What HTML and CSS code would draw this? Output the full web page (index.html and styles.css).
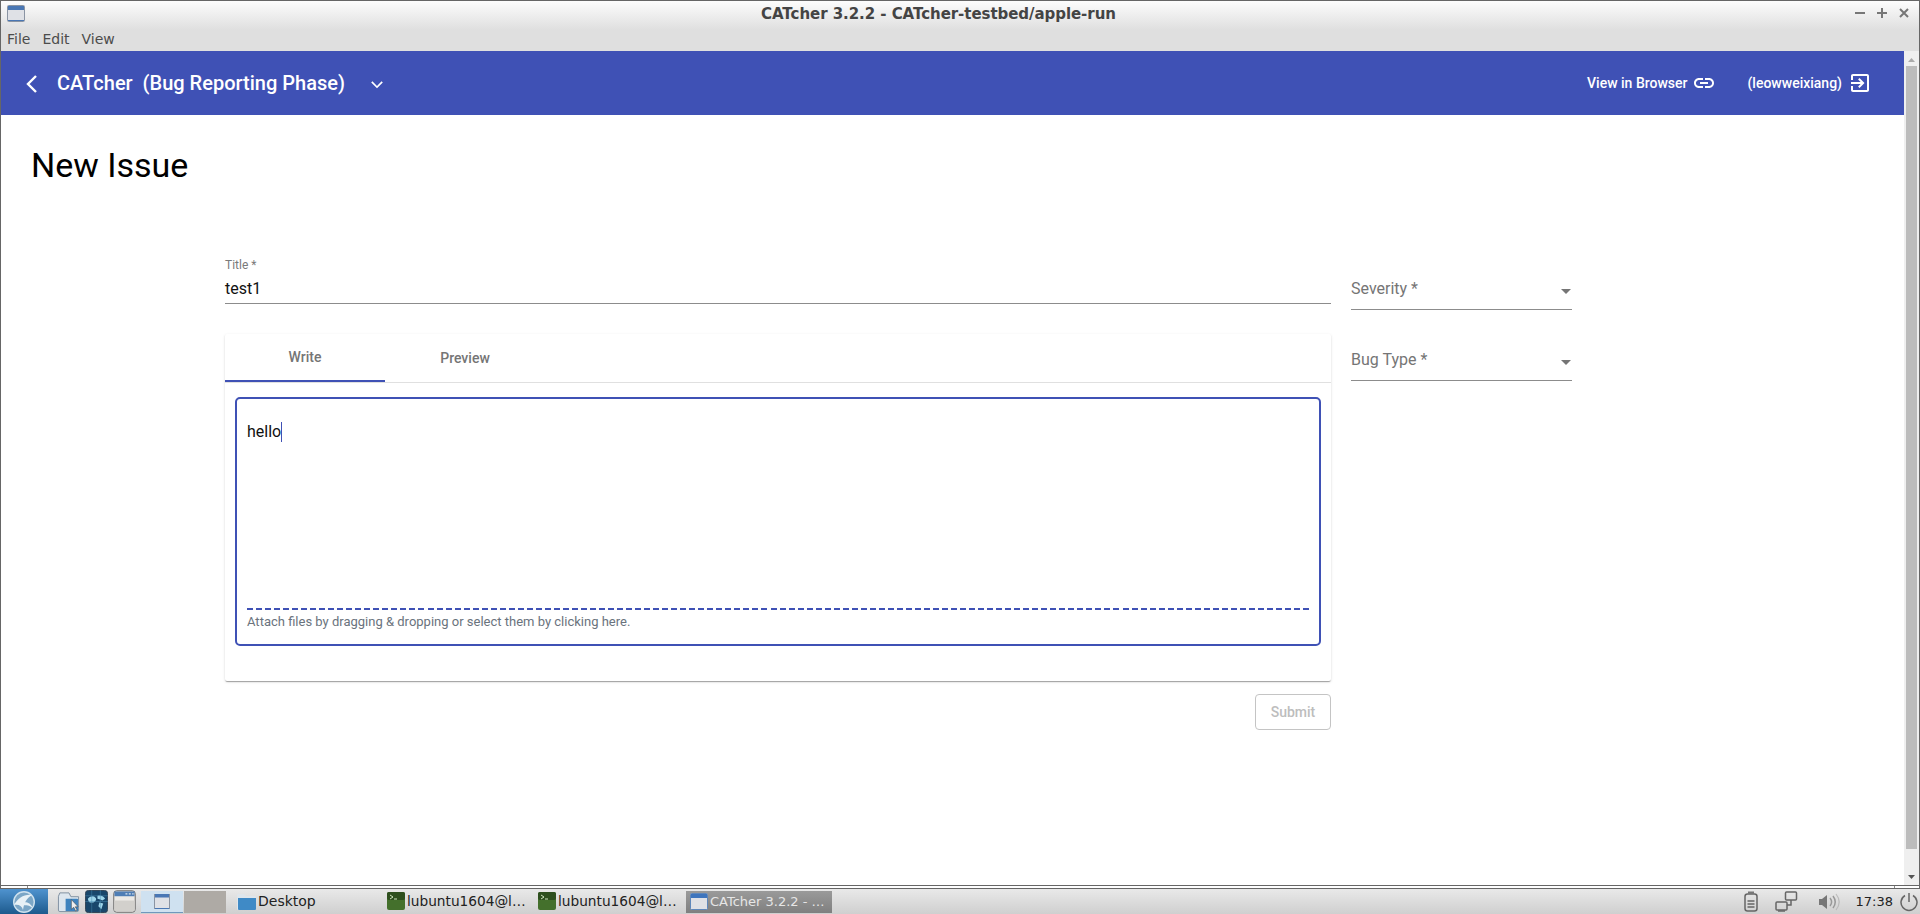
FILE: index.html
```html
<!DOCTYPE html>
<html lang="en">
<head>
<meta charset="utf-8">
<title>CATcher 3.2.2 - CATcher-testbed/apple-run</title>
<link rel="stylesheet" href="styles.css">
</head>
<body>
<div class="window">
  <div class="titlebar">
    <svg class="win-icon" width="18" height="17" viewBox="0 0 18 17"><rect x="0.5" y="0.5" width="17" height="16" rx="1" fill="#dfe1e6" stroke="#8a94a3"/><rect x="1" y="1" width="16" height="4" fill="#4a77b4"/><rect x="1" y="15" width="16" height="1" fill="#4a77b4"/></svg>
    <div class="win-title">CATcher 3.2.2 - CATcher-testbed/apple-run</div>
    <div class="win-controls">
      <svg width="12" height="12" viewBox="0 0 12 12"><path d="M1 6h10" stroke="#777" stroke-width="2"/></svg>
      <svg width="12" height="12" viewBox="0 0 12 12"><path d="M1 6h10M6 1v10" stroke="#777" stroke-width="2"/></svg>
      <svg width="12" height="12" viewBox="0 0 12 12"><path d="M2 2l8 8M10 2l-8 8" stroke="#777" stroke-width="2"/></svg>
    </div>
  </div>
  <div class="menubar"><span>File</span><span>Edit</span><span>View</span></div>
  <div class="viewport">
    <div class="app">
      <header class="appbar">
        <svg class="back" width="14" height="22" viewBox="0 0 14 22"><path d="M12 3l-8 8 8 8" fill="none" stroke="#fff" stroke-width="2.400"/></svg>
        <span class="app-name">CATcher&nbsp; (Bug Reporting Phase)</span>
        <svg class="chev" width="24" height="24" viewBox="0 0 24 24"><path d="M7.400 9.300L12 13.900l4.600-4.600 1.200 1.200-5.800 5.800-5.800-5.800z" fill="#fff"/></svg>
        <span class="spacer"></span>
        <span class="bar-link">View in Browser</span>
        <svg class="link-icon" width="24" height="24" viewBox="0 0 24 24"><path d="M3.900 12c0-1.710 1.390-3.100 3.100-3.100h4V7H7c-2.760 0-5 2.240-5 5s2.240 5 5 5h4v-1.900H7c-1.710 0-3.100-1.390-3.100-3.100zM8 13h8v-2H8v2zm9-6h-4v1.900h4c1.710 0 3.100 1.390 3.100 3.100s-1.390 3.100-3.100 3.100h-4V17h4c2.760 0 5-2.240 5-5s-2.240-5-5-5z" fill="#fff"/></svg>
        <span class="bar-link user">(leowweixiang)</span>
        <svg class="exit-icon" width="24" height="24" viewBox="0 0 24 24"><path d="M10.090 15.590L11.500 17l5-5-5-5-1.410 1.410L12.670 11H3v2h9.670l-2.580 2.590zM19 3H5c-1.110 0-2 .9-2 2v4h2V5h14v14H5v-4H3v4c0 1.100.89 2 2 2h14c1.100 0 2-.9 2-2V5c0-1.100-.9-2-2-2z" fill="#fff"/></svg>
      </header>
      <main class="page">
        <h1 class="page-title">New Issue</h1>
        <div class="form-row">
          <div class="form-main">
            <div class="field title-field">
              <label class="float-label">Title *</label>
              <div class="field-value">test1</div>
            </div>
            <section class="card">
              <div class="tabs">
                <div class="tab active">Write</div>
                <div class="tab">Preview</div>
              </div>
              <div class="editor">
                <div class="editor-text">hello<span class="caret"></span></div>
                <div class="attach-rule"></div>
                <div class="attach">Attach files by dragging &amp; dropping or select them by clicking here.</div>
              </div>
            </section>
            <div class="actions"><button class="submit" disabled>Submit</button></div>
          </div>
          <aside class="form-side">
            <div class="select"><span>Severity *</span><i class="arrow"></i></div>
            <div class="select"><span>Bug Type *</span><i class="arrow"></i></div>
          </aside>
        </div>
      </main>
    </div>
    <div class="scrollbar">
      <svg class="sb-up" width="7" height="4" viewBox="0 0 7 4"><path d="M3.500 0L7 4H0z" fill="#aaa"/></svg>
      <div class="sb-thumb"></div>
      <svg class="sb-down" width="7" height="4" viewBox="0 0 7 4"><path d="M3.500 4L7 0H0z" fill="#555"/></svg>
    </div>
  </div>
</div>
<div class="grip"></div>
<footer class="taskbar">
  <div class="start">
    <svg width="24" height="24" viewBox="0 0 24 24"><circle cx="12" cy="12" r="10.300" fill="#7ba6c6" stroke="#cfe2ef" stroke-width="1.400"/><path d="M2 15C6 8 12 4 20 5 15 8 12 12 11 20 10 16 7 14 2 15zM13 12c3 0 6 2 8 6-3-2-5-3-9-3z" fill="#e8f1f6"/></svg>
  </div>
  <div class="launchers">
    <svg width="24" height="24" viewBox="0 0 24 24"><path d="M1.500 6.500V21a1.500 1.500 0 0 0 1.500 1.500h18a1.500 1.500 0 0 0 1.500-1.500V7h-8l-2-4H3z" fill="#dde6ee" stroke="#7e8fa0"/><path d="M9 9h12a1 1 0 0 1 1 1v11a1 1 0 0 1-1 1H9z" fill="#3f83be"/><path d="M15 10l0 10 2.500-2 2 4 1.500-1-2-3.500h3z" fill="#eee" stroke="#333" stroke-width=".5"/></svg>
    <svg width="24" height="24" viewBox="0 0 24 24"><rect x=".5" y=".5" width="23" height="23" rx="3" fill="#19476b" stroke="#345"/><path d="M3 9c3-3 6-3 8-1s-1 5-3 5-4 1-5-4zM13 6c3-1 6 0 8 3l-3 2-2-1-3-1zM15 13l4 1-2 6-3-3z" fill="#9fd6ea"/><path d="M0 6h24M0 12h24M7 0v24M16 0v24" stroke="#4a8bb0" stroke-width=".5"/></svg>
    <svg width="24" height="24" viewBox="0 0 24 24"><rect x=".8" y=".8" width="22.400" height="22.400" rx="3" fill="#eceae6" stroke="#666"/><rect x="1.500" y="1.500" width="21" height="5" fill="#4f7eb5"/><path d="M13 4h2M16.500 4h2M20 4h1.500" stroke="#dce6f0" stroke-width="1.400"/><rect x="1.500" y="11" width="21" height="11" fill="#d2d0cc"/></svg>
  </div>
  <div class="pager">
    <div class="desk current"><svg width="16" height="15" viewBox="0 0 16 15"><rect width="16" height="15" fill="#dfe1e6"/><rect width="16" height="3.500" fill="#4a77b4"/><rect y="14" width="16" height="1" fill="#4a77b4"/><path d="M.5 0v15M15.500 0v15" stroke="#8a94a3"/></svg></div>
    <div class="desk"></div>
  </div>
  <div class="task desktop">
    <svg width="20" height="18" viewBox="0 0 20 18"><path d="M1 3.500A1.500 1.500 0 0 1 2.500 2H8l2 2h8.500A1.500 1.500 0 0 1 20 5.500V16.500A1.500 1.500 0 0 1 18.500 18H2.500A1.500 1.500 0 0 1 1 16.500z" fill="#dfe6ec"/><path d="M2 6h18v11a1 1 0 0 1-1 1H3a1 1 0 0 1-1-1z" fill="#3f8ac6"/></svg>
    <span>Desktop</span>
  </div>
  <div class="task term">
    <svg width="18" height="18" viewBox="0 0 18 18"><rect width="18" height="18" rx="2" fill="#44702c"/><rect width="18" height="8" rx="2" fill="#2e4f1e"/><path d="M3 3l3 2-3 2" fill="none" stroke="#cde3bd"/><path d="M7 7h3" stroke="#cde3bd"/></svg>
    <span>lubuntu1604@l…</span>
  </div>
  <div class="task term">
    <svg width="18" height="18" viewBox="0 0 18 18"><rect width="18" height="18" rx="2" fill="#44702c"/><rect width="18" height="8" rx="2" fill="#2e4f1e"/><path d="M3 3l3 2-3 2" fill="none" stroke="#cde3bd"/><path d="M7 7h3" stroke="#cde3bd"/></svg>
    <span>lubuntu1604@l…</span>
  </div>
  <div class="task active-task">
    <svg width="18" height="17" viewBox="0 0 18 17"><rect x=".5" y=".5" width="17" height="16" rx="1" fill="#dfe1e6" stroke="#5e87bb"/><rect x="1" y="1" width="16" height="4" fill="#3f75bd"/></svg>
    <span>CATcher 3.2.2 - …</span>
  </div>
  <span class="spacer"></span>
  <div class="tray">
    <svg class="battery" width="14" height="21" viewBox="0 0 14 21"><rect x="1" y="3" width="12" height="17" rx="2.500" fill="none" stroke="#666" stroke-width="1.500"/><rect x="4" y="0.500" width="6" height="2.500" fill="#777"/><path d="M3.500 10h7M3.500 13h7M3.500 16h7" stroke="#666" stroke-width="1.500"/></svg>
    <svg class="network" width="24" height="22" viewBox="0 0 24 22"><rect x="10.500" y="1" width="11" height="8" rx="1" fill="none" stroke="#666" stroke-width="1.500"/><rect x="1" y="11" width="11" height="8" rx="1" fill="none" stroke="#666" stroke-width="1.500"/><path d="M16 9v5h-4" fill="none" stroke="#666" stroke-width="1.500"/><path d="M3 20h7" stroke="#666" stroke-width="1.500"/></svg>
    <svg class="vol" width="22" height="20" viewBox="0 0 22 20"><path d="M1 7h3l5-4v14l-5-4H1z" fill="#777"/><path d="M12 6c2 2.500 2 5.500 0 8M15 4c3 4 3 8 0 12" fill="none" stroke="#999" stroke-width="1.500"/><path d="M18 2c4 5 4 11 0 16" fill="none" stroke="#bbb" stroke-width="1.200"/></svg>
    <span class="clock">17:38</span>
    <svg class="power" width="18" height="20" viewBox="0 0 18 20"><path d="M5 3.500a8 8 0 1 0 8 0" fill="none" stroke="#666" stroke-width="1.500"/><path d="M9 1v9" stroke="#666" stroke-width="1.500"/></svg>
  </div>
</footer>
</body>
</html>
```
FILE: styles.css
```css
* { box-sizing: border-box; }
html, body { margin: 0; height: 100%; overflow: hidden; }
body {
  width: 1920px;
  height: 914px;
  display: flex;
  flex-direction: column;
  font-family: Roboto, "Liberation Sans", sans-serif;
  background: #fff;
}
.window {
  flex: 1;
  min-height: 0;
  display: flex;
  flex-direction: column;
  border: 1px solid #666;
}
.titlebar {
  height: 29px;
  flex: none;
  display: flex;
  align-items: flex-start;
  position: relative;
  padding: 4px 9px 0 6px;
  background: linear-gradient(#fdfdfd 0%, #f2f2f2 35%, #dfdfdf 100%);
}
.win-icon { display: block; }
.win-title {
  position: absolute;
  left: 760px;
  top: 4px;
  font: bold 15px "DejaVu Sans", sans-serif;
  letter-spacing: -.05px;
  color: #444;
  white-space: nowrap;
}
.win-controls { margin-left: auto; margin-top: 2px; display: flex; gap: 10px; }
.win-controls svg { display: block; }
.menubar {
  height: 21px;
  flex: none;
  background: #dfdfdf;
  display: flex;
  gap: 12px;
  padding: 0 0 3px 6px;
  align-items: center;
  font: 14px "DejaVu Sans", sans-serif;
  color: #4c4c4c;
}
.viewport { flex: 1; min-height: 0; display: flex; }
.app { flex: 1; min-width: 0; display: flex; flex-direction: column; }
.appbar {
  height: 64px;
  flex: none;
  background: #3f51b5;
  color: #fff;
  display: flex;
  align-items: center;
  padding: 0 32px 0 23px;
}
.back { margin-right: 19px; margin-top: 2px; }
.app-name { font-size: 20px; font-weight: 500; margin-right: 20px; white-space: pre; }
.chev { display: block; margin-top: 1px; }
.spacer { flex: 1; }
.bar-link { font-size: 14px; font-weight: 500; }
.link-icon { margin-left: 4px; }
.user { margin-left: 32px; }
.exit-icon { margin-left: 6px; }
.page { flex: 1; min-height: 0; padding: 0 0 0 30px; }
.page-title {
  margin: 0;
  padding-top: 30px;
  font-size: 34px;
  font-weight: 400;
  line-height: 40px;
  color: #000;
}
.form-row { display: flex; gap: 20px; padding: 67px 0 0 194px; }
.form-main { width: 1106px; }
.form-side { width: 221px; padding-top: 14px; }
.field { border-bottom: 1px solid #8c8c8c; }
.title-field { height: 46px; margin-top: 6px; }
.float-label { display: block; font-size: 12px; line-height: 14px; color: #7a7a7a; }
.field-value { font-size: 16px; line-height: 22px; margin-top: 6px; color: #111; }
.card {
  margin-top: 30px;
  height: 347px;
  background: #fff;
  display: flex;
  flex-direction: column;
  box-shadow: 0 2px 1px -1px rgba(0,0,0,.2), 0 1px 1px 0 rgba(0,0,0,.14), 0 1px 3px 0 rgba(0,0,0,.12);
  border-radius: 2px;
}
.tabs { height: 49px; flex: none; display: flex; border-bottom: 1px solid #e0e0e0; }
.tab {
  width: 160px;
  display: flex;
  align-items: center;
  justify-content: center;
  font-size: 14px;
  font-weight: 500;
  color: #757575;
  height: 48px;
}
.tab.active { border-bottom: 2px solid #3f51b5; }
.editor {
  margin: 14px 10px 0;
  height: 249px;
  border: 2px solid #3f51b5;
  border-radius: 5px;
  padding: 0 10px;
  display: flex;
  flex-direction: column;
}
.editor-text { flex: 1; padding-top: 21px; font-size: 16px; line-height: 24px; color: #111; }
.caret { display: inline-block; width: 1px; height: 20px; background: #3f51b5; vertical-align: -5px; }
.attach-rule {
  height: 2px;
  flex: none;
  background: repeating-linear-gradient(90deg, #3f51b5 0 6px, transparent 6px 9.026px);
}
.attach {
  height: 34px;
  flex: none;
  font-size: 13px;
  line-height: 19px;
  padding-top: 2px;
  color: #6a737d;
}
.actions { display: flex; justify-content: flex-end; margin-top: 13px; }
.submit {
  width: 76px;
  height: 36px;
  background: #fff;
  border: 1px solid #c4c4c4;
  border-radius: 4px;
  font: 500 14px Roboto, sans-serif;
  color: #bdbdbd;
  padding: 0;
}
.select {
  height: 44px;
  margin-bottom: 27px;
  border-bottom: 1px solid #8c8c8c;
  font-size: 16px;
  color: #757575;
  display: flex;
  justify-content: space-between;
  padding: 13px 1px 0 0;
  line-height: 19px;
}
.arrow {
  width: 0;
  height: 0;
  border: 5px solid transparent;
  border-top-color: #757575;
  border-bottom-width: 0;
  margin-top: 10px;
}
.scrollbar {
  width: 15px;
  flex: none;
  background: #efefef;
  display: flex;
  flex-direction: column;
  align-items: center;
  padding: 7px 0 6px;
}
.sb-thumb { width: 11px; height: 783px; flex: none; background: #bcbcbc; margin-top: 4px; }
.sb-down { margin-top: auto; }
.grip {
  height: 2px;
  flex: none;
  background:
    linear-gradient(#888, #888) 26px 0 / 1px 100% no-repeat,
    linear-gradient(#888, #888) 1893px 0 / 1px 100% no-repeat,
    #fff;
  border-left: 1px solid #666;
  border-right: 1px solid #666;
}
.taskbar {
  height: 26px;
  flex: none;
  display: flex;
  align-items: stretch;
  background: linear-gradient(#e9e9e9, #cfcfcf);
  border-top: 1px solid #666;
  font: 14px "DejaVu Sans", sans-serif;
  color: #222;
}
.start {
  width: 48px;
  background: linear-gradient(#4f93cf, #1d5a8d);
  display: flex;
  align-items: center;
  justify-content: center;
}
.launchers { display: flex; gap: 5px; align-items: center; padding: 0 0 0 9px; width: 93px; }
.launchers svg { flex: none; width: 23px; height: 23px; }
.pager { display: flex; gap: 1px; padding: 2px 0 1px; }
.desk { width: 42px; background: #aeaaa5; }
.desk.current { background: #cfe1f0; border-bottom: 1px solid #6f97bd; display: flex; align-items: center; justify-content: center; }
.task { display: flex; align-items: center; gap: 2px; white-space: nowrap; padding-bottom: 1px; }
.desktop { width: 152px; padding-left: 10px; }
.term { width: 151px; padding-left: 9px; font-size: 13.700px; }
.active-task {
  width: 146px;
  margin: 2px 0 1px 6px;
  padding-left: 4px;
  background: linear-gradient(#9a9a9a, #7f7f7f);
  color: #e6e6e6;
  font-size: 13px;
}
.tray { display: flex; align-items: center; padding-right: 2px; }
.tray svg { display: block; }
.tray .network { margin-left: 17px; }
.tray .vol { margin-left: 19px; }
.clock { margin-left: 16px; font-size: 13px; color: #222; }
.tray .power { margin-left: 7px; }
```
